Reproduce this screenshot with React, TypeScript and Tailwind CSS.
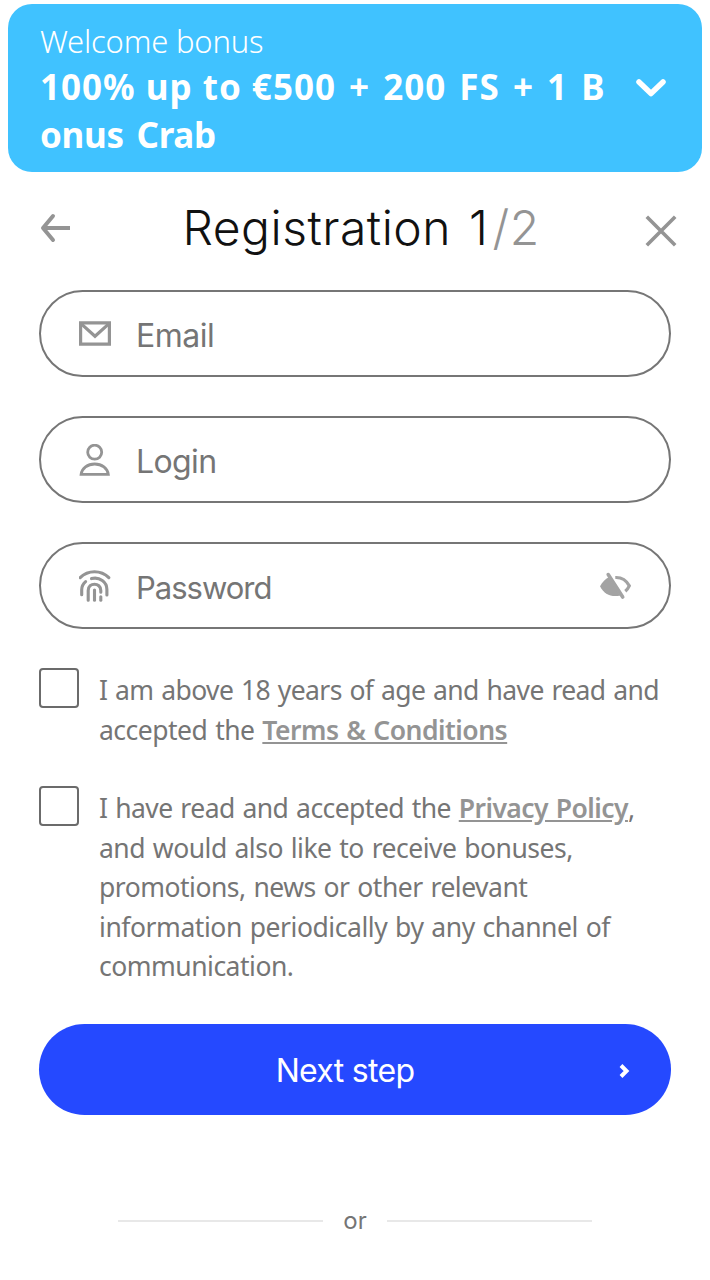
import React, { useState } from 'react';

interface FieldProps {
    label: string;
    type: string;
    labelClass: string;
    icon: React.ReactNode;
    action?: React.ReactNode;
}

interface ConsentProps {
    className: string;
    children: React.ReactNode;
}

const MailIcon = () => (
    <svg className="size-8 shrink-0" viewBox="0 0 32 32" fill="none" stroke="#949494" strokeWidth="3.2">
        <path d="M1.6 4.8h28.8v21.4H1.6z" />
        <path d="M2 5.6l14 12.7L30 5.6" />
    </svg>
);

const UserIcon = () => (
    <svg className="size-8 shrink-0" viewBox="0 0 32 32" fill="none" stroke="#949494" strokeWidth="2.8">
        <circle cx="15.7" cy="8.2" r="7" />
        <path d="M2.1 30.4C2.9 24.4 8.5 20 15.7 20s12.8 4.4 13.6 10.4z" />
    </svg>
);

const FingerprintIcon = () => (
    <svg className="size-8 shrink-0" viewBox="0 0 32 32" fill="none" stroke="#949494" strokeWidth="3.1" strokeLinecap="round">
        <path d="M1.2 7.700C9-.3 22-.3 29.8 7.700" />
        <path d="M12.5 8.600c8.200-2 15.400 3.400 15.400 10.800V25" />
        <path d="M2.7 24.800v-5c0-3.400 1.300-6 3.900-8.200" />
        <path d="M9.2 30.200V20.500c0-8.400 12.600-8.400 12.600 0v1.800" />
        <path d="M15.5 20v10.200" />
        <path d="M21.8 26.800v3.400" />
    </svg>
);

const EyeOffIcon = () => (
    <svg className="h-7 w-8" viewBox="0 0 32 28" fill="none">
        <path d="M0 14.2C2.5 9.8 5.3 7 8.7 5.3L20.3 23.4C12 25.6 4 22.5 0 14.2z" fill="#a3a3a3" />
        <path d="M8.2 2.6l14.5 22.4" stroke="#a3a3a3" strokeWidth="3.6" strokeLinecap="round" />
        <path d="M15.3 5.5c6.200-.3 10.800 2.400 14 8.300-1 2.200-2.300 3.900-4 5.400" stroke="#a3a3a3" strokeWidth="3.2" />
    </svg>
);

const Field: React.FC<FieldProps> = ({ label, type, labelClass, icon, action }) => (
    <label className="flex h-[87px] items-center rounded-full border-2 border-[#767676] pr-[37px] pl-[38px]">
        {icon}
        <input
            type={type}
            placeholder={label}
            className={`ml-[25px] min-w-0 flex-1 bg-transparent pt-1 font-[Inter,sans-serif] leading-10 text-[#757575] outline-none placeholder:text-[#757575] ${labelClass}`}
        />
        {action}
    </label>
);

const Consent: React.FC<ConsentProps> = ({ className, children }) => (
    <div className={`flex items-start ${className}`}>
        <input type="checkbox" className="size-10 shrink-0 appearance-none rounded-[4px] border-2 border-[#6b6b6b] checked:bg-[#2549ff]" />
        <p className="mt-[3px] ml-5 font-['Noto_Sans',sans-serif] text-[26.5px] leading-[39.5px] tracking-[-0.5px] whitespace-nowrap text-[#757575] [word-spacing:1.4px]">
            {children}
        </p>
    </div>
);

export default function App() {
    const [showPassword, setShowPassword] = useState(false);

    return (
        <div className="h-[1280px] w-[710px] overflow-hidden bg-white pt-1">
            {/* Bonus banner */}
            <div className="mx-2 flex h-[168px] items-center rounded-[24px] bg-[#40c2ff] pr-[35px] pl-8 font-['Noto_Sans',sans-serif] text-white">
                <div className="flex-1 pt-0.5 whitespace-nowrap">
                    <p className="text-[31px] leading-[44px] font-light tracking-[-0.2px]">Welcome bonus</p>
                    <p className="text-[35px] leading-12 font-bold tracking-[1px]">
                        <span className="block">
                            100% up to €500<span className="[word-spacing:3px]"> + 200 FS + 1 B</span>
                        </span>
                        <span className="block tracking-[-0.3px] [word-spacing:4px]">onus Crab</span>
                    </p>
                </div>
                <svg className="h-5 w-8 shrink-0" viewBox="0 0 32 20" fill="none" stroke="white" strokeWidth="5.5" strokeLinecap="round" strokeLinejoin="round">
                    <path d="M4 4l12 11.5L28 4" />
                </svg>
            </div>

            {/* Header */}
            <header className="flex h-[118px] items-center justify-between pr-[33px] pl-10">
                <button aria-label="Back" className="pb-[6px]">
                    <svg className="h-8 w-[31px]" viewBox="0 0 31 32" fill="none" stroke="#949494" strokeWidth="4">
                        <path d="M2.5 16H30" />
                        <path d="M13 4L3 16l10 12" strokeLinecap="round" strokeLinejoin="round" />
                    </svg>
                </button>
                <h1 className="ml-1.5 pb-[7px] font-[Inter,sans-serif] text-[48px] leading-[60px] font-light tracking-[0.5px] whitespace-nowrap text-[#111] [word-spacing:4px]">
                    Registration 1<span className="ml-1 text-[#949494]">/2</span>
                </h1>
                <button aria-label="Close">
                    <svg className="size-8" viewBox="0 0 32 32" fill="none" stroke="#949494" strokeWidth="3.6">
                        <path d="M1.8 1.8l28.4 28.4M30.2 1.8L1.8 30.2" />
                    </svg>
                </button>
            </header>

            <form className="mx-[39px]" onSubmit={e => e.preventDefault()}>
                <div className="flex flex-col gap-[39px]">
                    <Field label="Email" type="email" labelClass="text-[32px] tracking-[-0.5px]" icon={<MailIcon />} />
                    <Field label="Login" type="text" labelClass="text-[32px] tracking-[-0.6px]" icon={<UserIcon />} />
                    <Field
                        label="Password"
                        type={showPassword ? 'text' : 'password'}
                        labelClass="text-[31px] tracking-[-1px]"
                        icon={<FingerprintIcon />}
                        action={
                            <button type="button" aria-label="Toggle password" onClick={() => setShowPassword(!showPassword)}>
                                <EyeOffIcon />
                            </button>
                        }
                    />
                </div>

                <Consent className="mt-[39px]">
                    <span className="block tracking-[-0.6px]">I am above 18 years of age and have read and</span>
                    <span className="block">
                        accepted the <a className="font-semibold text-[#949494] underline">Terms &amp; Conditions</a>
                    </span>
                </Consent>
                <Consent className="mt-[36px]">
                    <span className="block tracking-[-0.55px]">
                        I have read and accepted the <a className="font-semibold text-[#949494] underline">Privacy Policy</a>,
                    </span>
                    <span className="block">and would also like to receive bonuses,</span>
                    <span className="block">promotions, news or other relevant</span>
                    <span className="block tracking-[-0.45px]">information periodically by any channel of</span>
                    <span className="block">communication.</span>
                </Consent>

                <button className="mt-[37px] flex h-[91px] w-full items-center rounded-full bg-[#2549ff] pr-[41px] pl-[32px] text-white">
                    <span className="flex-1 pt-[3px] font-[Inter,sans-serif] text-[32px] leading-10 tracking-[-0.7px]">Next step</span>
                    <svg className="mt-1 h-4 w-[11px]" viewBox="0 0 11 16" fill="none" stroke="white" strokeWidth="4">
                        <path d="M2 2.5L7.5 8 2 13.5" />
                    </svg>
                </button>
            </form>

            <div className="mx-[118px] mt-[91.5px] flex h-[30px] items-center">
                <span className="h-0.5 flex-1 bg-[#e8e8e8]" />
                <span className="w-16 text-center font-[Inter,sans-serif] text-[24px] leading-[30px] text-[#757575]">or</span>
                <span className="h-0.5 flex-1 bg-[#e8e8e8]" />
            </div>
        </div>
    );
}
